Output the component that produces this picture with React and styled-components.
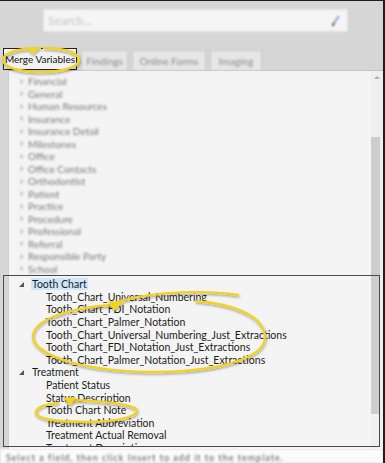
import styled, { createGlobalStyle } from 'styled-components';

const Global = createGlobalStyle`
  html, body { margin: 0; padding: 0; background: #d5d5d5; }
  body { font-family: "Lato", "Noto Sans", sans-serif; }
`;

const Frame = styled.div`
  position: relative;
  width: 385px;
  height: 463px;
  box-sizing: border-box;
  border-top: 1px solid #1e1e1e;
  border-right: 2px solid #1e1e1e;
  background: #d6d6d6;
  overflow: hidden;
  display: flex;
  flex-direction: column;
`;

const SearchRow = styled.div`
  padding: 8px 0 0 43px;
  filter: blur(0.8px);
`;

const SearchBox = styled.div`
  width: 305px;
  height: 23px;
  box-sizing: border-box;
  background: #f5f5f5;
  border: 1px solid #e2e2e2;
  display: flex;
  align-items: center;
  justify-content: space-between;
  padding: 0 6px 0 4px;
  color: #c4c4c4;
  font-size: 12px;
`;

const TabBar = styled.div`
  display: flex;
  align-items: flex-end;
  gap: 4px;
  margin-top: 15px;
  padding-left: 3px;
  height: 23px;
`;

const Tab = styled.div`
  width: ${p => p.$w}px;
  height: ${p => (p.$active ? 22 : 20)}px;
  box-sizing: border-box;
  display: flex;
  align-items: center;
  justify-content: center;
  font-size: 10px;
  color: ${p => (p.$active ? '#111' : '#8a8a8a')};
  background: ${p => (p.$active ? '#f2f2f2' : '#e6e6e6')};
  border: 1px solid ${p => (p.$active ? '#222' : '#c9c9c9')};
  border-bottom: ${p => (p.$active ? '1px solid #222' : 'none')};
  filter: ${p => (p.$active ? 'none' : 'blur(0.8px)')};
  white-space: nowrap;
`;

const Panel = styled.div`
  flex: 1;
  margin-left: 8px;
  display: flex;
  background: #f4f4f4;
  border-top: 1px solid #c4c4c4;
  border-left: 1px solid #cdcdcd;
  min-height: 0;
`;

const Content = styled.div`
  flex: 1;
  min-width: 0;
  display: flex;
  flex-direction: column;
  padding-top: 4px;
`;

const BlurList = styled.div`
  filter: blur(1px);
`;

const Row = styled.div`
  height: ${p => p.$h || 12.6}px;
  display: flex;
  align-items: center;
  padding-left: ${p => p.$indent}px;
  font-size: ${p => p.$size || 10.5}px;
  color: ${p => p.$color || '#1c1c1c'};
  white-space: nowrap;
`;

const Plus = styled.span`
  width: 9px;
  font-size: 9px;
  color: #999;
`;

const Caret = styled.span`
  width: 0;
  height: 0;
  margin: 0 7px 0 0;
  border-left: 5px solid transparent;
  border-bottom: 5px solid #555;
`;

const Label = styled.span`
  padding: 0 1px;
  line-height: 12px;
  background: ${p => (p.$selected ? '#cce8ff' : 'transparent')};
`;

const FocusBox = styled.div`
  position: relative;
  z-index: 2;
  margin: 0 -9px 0 -6px;
  height: 172px;
  box-sizing: border-box;
  border: 1.5px solid #4a4a4a;
  overflow: hidden;
  padding-top: 2px;
`;

const Scrollbar = styled.div`
  width: 12px;
  background: #efefef;
  display: flex;
  flex-direction: column;
  align-items: center;
`;

const ArrowUp = styled.div`
  margin-top: 5px;
  width: 0;
  height: 0;
  border-left: 3px solid transparent;
  border-right: 3px solid transparent;
  border-bottom: 3px solid #b0b0b0;
  filter: blur(0.5px);
`;

const Thumb = styled.div`
  margin-top: 58px;
  width: 9px;
  height: 277px;
  background: #cdcdcd;
  align-self: flex-start;
`;

const BottomStrip = styled.div`
  height: 14px;
  background: #fbfbfb;
  display: flex;
  align-items: flex-end;
  padding-left: 6px;
  font-size: 9px;
  line-height: 10px;
  letter-spacing: 1px;
  color: #555;
  filter: blur(1.2px);
  white-space: nowrap;
  overflow: hidden;
`;

const Overlay = styled.svg`
  position: absolute;
  inset: 0;
  z-index: 5;
  pointer-events: none;
`;

const groups = [
  'Financial', 'General', 'Human Resources', 'Insurance', 'Insurance Detail',
  'Milestones', 'Office', 'Office Contacts', 'Orthodontist', 'Patient',
  'Practice', 'Procedure', 'Professional', 'Referral', 'Responsible Party', 'School',
];

const toothItems = [
  'Tooth_Chart_Universal_Numbering',
  'Tooth_Chart_FDI_Notation',
  'Tooth_Chart_Palmer_Notation',
  'Tooth_Chart_Universal_Numbering_Just_Extractions',
  'Tooth_Chart_FDI_Notation_Just_Extractions',
  'Tooth_Chart_Palmer_Notation_Just_Extractions',
];

const treatmentItems = [
  'Patient Status',
  'Status Description',
  'Tooth Chart Note',
  'Treatment Abbreviation',
  'Treatment Actual Removal',
  'Treatment Description',
];

const Annotations = () => (
  <Overlay width="385" height="463" viewBox="0 0 385 463">
    <defs>
      <filter id="sh" x="-10%" y="-10%" width="120%" height="130%">
        <feDropShadow dx="0.5" dy="1.5" stdDeviation="1" floodColor="#000" floodOpacity="0.35" />
      </filter>
    </defs>
    <g fill="none" stroke="#f1d224" strokeWidth="2.4" strokeLinecap="round" filter="url(#sh)">
      <path d="M40 47 C22 47 3 51 3 59 C3 67 22 71 40 71 C60 71 79 67 79 59 C79 51 62 47 44 47" />
      <path d="M28 47 L33 52 L38 47" />
      <path d="M112 304 C62 308 33 320 33 336 C34 356 92 372 160 371 C228 370 268 354 265 334 C262 314 232 303 196 300" />
      <path d="M112 303 C140 292 196 288 238 294" />
      <path d="M67 399 C92 400 120 401 135 407 C144 414 120 421 86 421 C52 421 35 417 36 411 C37 405 48 403 58 402" />
    </g>
    <g fill="#f1d224" filter="url(#sh)">
      <path d="M108 300 L124 301 L114 310 Z" />
      <path d="M63 397 L76 396 L71 405 Z" />
    </g>
  </Overlay>
);

export default function App() {
  return (
    <Frame>
      <Global />
      <SearchRow>
        <SearchBox>
          <span>Search...</span>
          <svg width="10" height="12" viewBox="0 0 10 12">
            <path d="M8 1 L3 8" stroke="#7fa6c8" strokeWidth="2" />
            <path d="M3 8 L1.5 11" stroke="#555" strokeWidth="2" />
          </svg>
        </SearchBox>
      </SearchRow>
      <TabBar>
        <Tab $active $w={74}>Merge Variables</Tab>
        <Tab $w={47}>Findings</Tab>
        <Tab $w={74}>Online Forms</Tab>
        <Tab $w={52}>Imaging</Tab>
      </TabBar>
      <Panel>
        <Content>
          <BlurList>
            {groups.map(g => (
              <Row key={g} $indent={10} $size={10} $h={12.5} $color="#7a7a7a">
                <Plus>+</Plus>
                <span>{g}</span>
              </Row>
            ))}
          </BlurList>
          <FocusBox>
            <Row $indent={15}>
              <Caret />
              <Label $selected>Tooth Chart</Label>
            </Row>
            {toothItems.map(t => (
              <Row key={t} $indent={42}>{t}</Row>
            ))}
            <Row $indent={15}>
              <Caret />
              <Label>Treatment</Label>
            </Row>
            {treatmentItems.map(t => (
              <Row key={t} $indent={42}>{t}</Row>
            ))}
          </FocusBox>
        </Content>
        <Scrollbar>
          <ArrowUp />
          <Thumb />
        </Scrollbar>
      </Panel>
      <BottomStrip>Select a field, then click Insert to add it to the template.</BottomStrip>
      <Annotations />
    </Frame>
  );
}
